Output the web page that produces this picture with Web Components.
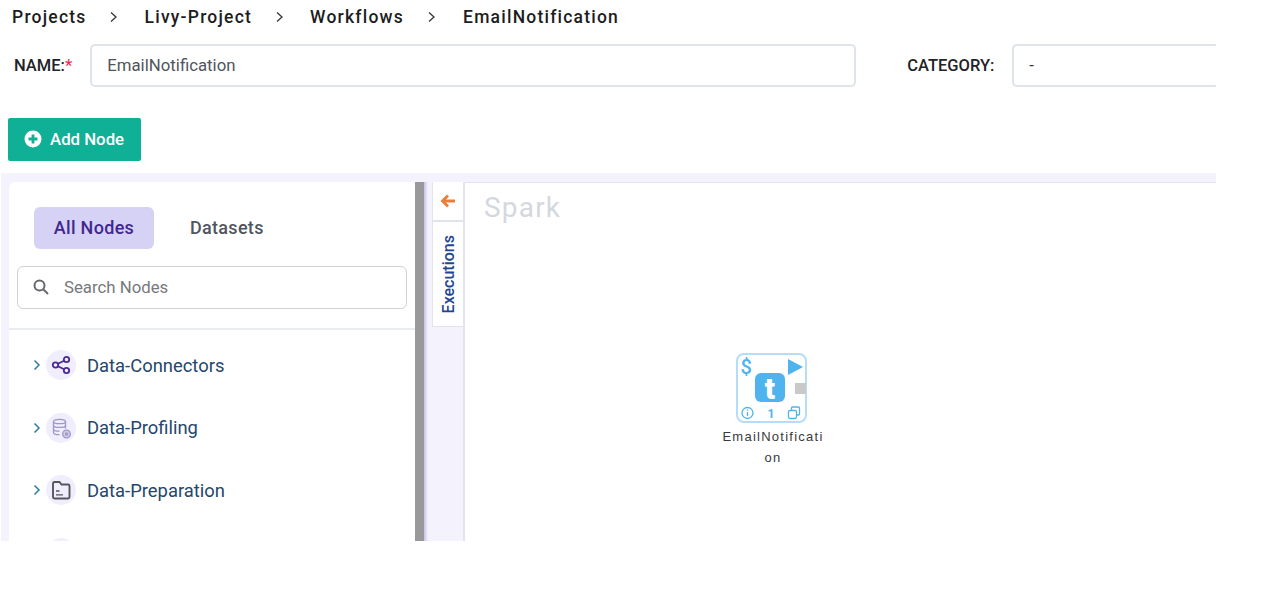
<!DOCTYPE html>
<html>
<head>
<meta charset="utf-8">
<title>EmailNotification</title>
<style>
    html, body { margin: 0; background: #fff; font-family: Roboto, "Liberation Sans", sans-serif; }
</style>
</head>
<body>
<workflow-page>
    <bread-crumbs></bread-crumbs>
    <name-row></name-row>
    <add-node-button></add-node-button>
    <work-space>
        <node-panel slot="panel"></node-panel>
        <side-tabs slot="tabs"></side-tabs>
        <flow-canvas slot="canvas"></flow-canvas>
    </work-space>
</workflow-page>

<script>
    // small helper so each element only declares its markup
    class ShadowElement extends HTMLElement {
        constructor() {
            super();
            this.attachShadow({mode: 'open'}).innerHTML = this.constructor.markup;
        }
    }

    class WorkflowPage extends ShadowElement {
        static markup = `
        <style>
            :host { display: flex; flex-direction: column; width: 1216px; height: 541px; overflow: hidden; background: #fff; }
        </style>
        <slot></slot>`;
    }

    class BreadCrumbs extends ShadowElement {
        static markup = `
        <style>
            :host { display: flex; flex: none; align-items: center; height: 34px; padding-left: 12px; font-size: 17.5px; font-weight: 500; letter-spacing: 1.22px; color: #1c1d20; }
            svg { width: 9px; height: 12px; fill: none; stroke: #33353a; stroke-width: 1.3; }
            .s1 { margin: 0 27px 0 22px; }
            .s2 { margin: 0 26px 0 23px; }
            .s3 { margin: 0 27px 0 23px; }
        </style>
        <span>Projects</span>
        <svg class="s1" viewBox="0 0 9 12"><path d="M2 1.500 7 6 2 10.500"/></svg>
        <span>Livy-Project</span>
        <svg class="s2" viewBox="0 0 9 12"><path d="M2 1.500 7 6 2 10.500"/></svg>
        <span>Workflows</span>
        <svg class="s3" viewBox="0 0 9 12"><path d="M2 1.500 7 6 2 10.500"/></svg>
        <span>EmailNotification</span>`;
    }

    class NameRow extends ShadowElement {
        static markup = `
        <style>
            :host { display: flex; flex: none; align-items: center; height: 43px; margin-top: 10px; padding-left: 14px; font-size: 16.500px; color: #212327; }
            label { font-weight: 500; white-space: nowrap; padding-bottom: 1px; }
            b { color: #e8334f; font-weight: 500; }
            .field { box-sizing: border-box; height: 43px; display: flex; align-items: center; padding: 0 0 2px 15px; background: #fff; border: 2px solid #dfe3ea; border-radius: 5px; color: #50555c; font-size: 16.800px; }
            .name { width: 766px; margin-left: 18px; flex: none; }
            .cat-label { margin-left: 51px; }
            .cat { flex: 1; margin-left: 18px; border-right: none; border-radius: 5px 0 0 5px; color: #333; }
        </style>
        <label>NAME:<b>*</b></label>
        <div class="field name">EmailNotification</div>
        <label class="cat-label">CATEGORY:</label>
        <div class="field cat">-</div>`;
    }

    class AddNodeButton extends ShadowElement {
        static markup = `
        <style>
            :host { display: flex; flex: none; align-items: center; gap: 8px; box-sizing: border-box; width: 133px; height: 43px; margin: 31px 0 0 8px; padding: 0 0 2px 16px; background: #10b096; border-radius: 2px; color: #fff; font-size: 16.800px; font-weight: 500; }
            svg { width: 18px; height: 18px; }
        </style>
        <svg viewBox="0 0 18 18"><circle cx="9" cy="9" r="8.500" fill="#fff"/><path d="M9 4.500v9M4.500 9h9" stroke="#10b096" stroke-width="2.800"/></svg>
        <span>Add Node</span>`;
    }

    class WorkSpace extends ShadowElement {
        static markup = `
        <style>
            :host { display: flex; flex: 1; min-height: 0; margin: 12px 0 0 1px; padding: 9px 0 0 8px; background: #f4f3fd; }
            .shade { width: 4px; background: linear-gradient(90deg, #c4c0ea, #f4f3fd); }
            .gap { width: 4px; }
        </style>
        <slot name="panel"></slot>
        <div class="shade"></div>
        <div class="gap"></div>
        <slot name="tabs"></slot>
        <slot name="canvas"></slot>`;
    }

    class NodePanel extends ShadowElement {
        static markup = `
        <style>
            :host { display: flex; flex-direction: column; position: relative; box-sizing: border-box; width: 415px; background: #fff; border-radius: 6px 0 0 0; overflow: hidden; border-right: 9px solid #999; }
            .tabs { display: flex; flex: none; align-items: center; height: 42px; margin: 25px 0 0 25px; font-size: 18px; font-weight: 500; letter-spacing: .3px; }
            .tab { display: flex; align-items: center; justify-content: center; box-sizing: border-box; height: 42px; padding-bottom: 2px; border-radius: 6px; }
            .on { width: 120px; background: #d6d2f5; color: #41288f; }
            .off { margin-left: 36px; color: #50555f; }
            .search { display: flex; flex: none; align-items: center; box-sizing: border-box; height: 43px; margin: 17px 8px 0 8px; padding: 0 0 2px 14px; border: 1.500px solid #cfd1d4; border-radius: 6px; color: #77797d; font-size: 16.800px; }
            .search svg { width: 18px; height: 18px; margin-right: 14px; flex: none; }
            hr { flex: none; height: 2px; margin: 19px 0 0; border: 0; background: #e9ecf0; }
            .tree { flex: none; padding: 4px 0 0 24px; }
        </style>
        <div class="tabs">
            <div class="tab on">All Nodes</div>
            <div class="tab off">Datasets</div>
        </div>
        <div class="search">
            <svg viewBox="0 0 18 18" fill="none" stroke="#66686c" stroke-width="2"><circle cx="7.500" cy="7.500" r="5"/><path d="m11.500 11.500 4.500 4.500"/></svg>
            <span>Search Nodes</span>
        </div>
        <hr>
        <div class="tree">
            <tree-row label="Data-Connectors" icon="share"></tree-row>
            <tree-row label="Data-Profiling" icon="db"></tree-row>
            <tree-row label="Data-Preparation" icon="folder"></tree-row>
            <tree-row icon="none"></tree-row>
        </div>`;
    }

    const treeIcons = {
        share: `<g fill="none" stroke="#4a2a96" stroke-width="1.800"><circle cx="5.500" cy="11" r="2.700"/><circle cx="16.500" cy="5.500" r="2.700"/><circle cx="16.500" cy="16.500" r="2.700"/><path d="M8 9.800 14 6.800M8 12.200l6 3"/></g>`,
        db: `<g fill="none" stroke="#9d98c6" stroke-width="1.300"><ellipse cx="9.500" cy="4.500" rx="6" ry="2.200"/><path d="M3.500 4.500v11c0 1.200 2.700 2.200 6 2.200M15.500 4.500v7M3.500 8.200c0 1.200 2.700 2.200 6 2.200s6-1 6-2.200M3.500 12c0 1.200 2.700 2.200 6 2.200"/><circle cx="16.500" cy="17" r="3.800" fill="#cfcbea"/><circle cx="16.500" cy="17" r="1"/></g>`,
        folder: `<g fill="none" stroke="#55565c" stroke-width="1.900"><path d="M3 18V4.500C3 3.500 3.600 3 4.500 3h5l2 2.500h6.500c1 0 1.500.6 1.500 1.500v11c0 .9-.5 1.500-1.500 1.500H4.500C3.600 19.500 3 18.900 3 18z"/><path d="M6 12h3.500M6 15.800h7" stroke-width="1.300"/></g>`,
        none: ''
    };

    class TreeRow extends HTMLElement {
        constructor() {
            super();
            this.attachShadow({mode: 'open'});
        }
        connectedCallback() {
            var label = this.getAttribute('label');
            this.shadowRoot.innerHTML = `
            <style>
                :host { display: flex; align-items: center; height: 62.500px; color: #24466c; font-size: 18.400px; }
                .arrow { width: 8px; height: 12px; margin-right: 5px; fill: none; stroke: #2f7d9c; stroke-width: 1.500; visibility: ${label ? 'visible' : 'hidden'}; }
                .badge { display: flex; align-items: center; justify-content: center; width: 30px; height: 30px; border-radius: 50%; background: #f0edfc; margin-right: 11px; }
                .badge svg { width: 22px; height: 22px; }
            </style>
            <svg class="arrow" viewBox="0 0 8 12"><path d="M1.500 1.500 6 6l-4.500 4.500"/></svg>
            <div class="badge"><svg viewBox="0 0 22 22">${treeIcons[this.getAttribute('icon')]}</svg></div>
            <span>${label || ''}</span>`;
        }
    }

    class SideTabs extends ShadowElement {
        static markup = `
        <style>
            :host { display: flex; flex-direction: column; box-sizing: border-box; width: 33px; background: #f4f3fd; border-right: 2px solid #e1e3ee; }
            .back { display: flex; align-items: center; justify-content: center; box-sizing: border-box; height: 40px; background: #fff; border-left: 1px solid #e1e3ee; border-bottom: 2px solid #dfe3ec; }
            .back svg { width: 16px; height: 14px; }
            .exec { display: flex; align-items: center; justify-content: center; box-sizing: border-box; height: 105px; background: #fff; border-left: 1px solid #e1e3ee; border-bottom: 1px solid #e1e3ee; color: #1f4690; font-size: 16px; font-weight: 500; }
            .exec span { writing-mode: vertical-rl; transform: rotate(180deg); }
        </style>
        <div class="back"><svg viewBox="0 0 16 14" fill="none" stroke="#e8803c" stroke-width="2.800"><path d="M8 1.500 2.500 7 8 12.500M3 7h12"/></svg></div>
        <div class="exec"><span>Executions</span></div>`;
    }

    class FlowCanvas extends ShadowElement {
        static markup = `
        <style>
            :host { display: block; position: relative; flex: 1; background: #fff; border-top: 1.500px solid #e4e4f0; }
            h2 { margin: 8px 0 0 19px; font-size: 28px; font-weight: 400; letter-spacing: 1.200px; color: #d3d8de; line-height: 33px; }
            flow-node { position: absolute; left: 248px; top: 170px; }
        </style>
        <h2>Spark</h2>
        <flow-node></flow-node>`;
    }

    class FlowNode extends ShadowElement {
        static markup = `
        <style>
            :host { display: block; width: 118px; text-align: center; }
            svg { display: block; width: 72px; height: 70px; margin: 0 auto 0 23px; }
            .title { width: 104px; margin: 3px 0 0 8px; font-size: 13px; line-height: 21px; letter-spacing: 1.250px; color: #3a3a3a; word-break: break-all; font-family: "Liberation Sans", sans-serif; }
            text { font-family: Roboto, sans-serif; }
        </style>
        <svg viewBox="0 0 72 70">
            <rect x="1" y="1" width="69" height="68" rx="7" fill="#fff" stroke="#b6ddf8" stroke-width="2"/>
            <text x="4.500" y="21" font-size="20" font-weight="500" fill="#4fb3ee">$</text>
            <path d="M52 6 67 14 52 22z" fill="#4fb3ee"/>
            <rect x="19" y="20" width="30" height="29" rx="6" fill="#4fb3ee"/>
            <text x="34" y="46" font-size="30" font-weight="900" fill="#fff" text-anchor="middle">t</text>
            <rect x="59" y="30" width="11" height="11" fill="#c9c9c9"/>
            <g fill="none" stroke="#4fb3ee" stroke-width="1.300"><circle cx="11.500" cy="60" r="5.500"/><path d="M11.500 59v4M11.500 56.500v1.200"/><rect x="52.500" y="57.500" width="8" height="8" rx="1.500"/><path d="M55.500 57.500v-2.500c0-.6.400-1 1-1h6c.6 0 1 .4 1 1v6c0 .6-.4 1-1 1h-2"/></g>
            <text x="35" y="65" font-size="12" font-weight="700" fill="#4fb3ee" text-anchor="middle">1</text>
        </svg>
        <div class="title">EmailNotification</div>`;
    }

    customElements.define('workflow-page', WorkflowPage);
    customElements.define('bread-crumbs', BreadCrumbs);
    customElements.define('name-row', NameRow);
    customElements.define('add-node-button', AddNodeButton);
    customElements.define('work-space', WorkSpace);
    customElements.define('node-panel', NodePanel);
    customElements.define('tree-row', TreeRow);
    customElements.define('side-tabs', SideTabs);
    customElements.define('flow-canvas', FlowCanvas);
    customElements.define('flow-node', FlowNode);
</script>
</body>
</html>
